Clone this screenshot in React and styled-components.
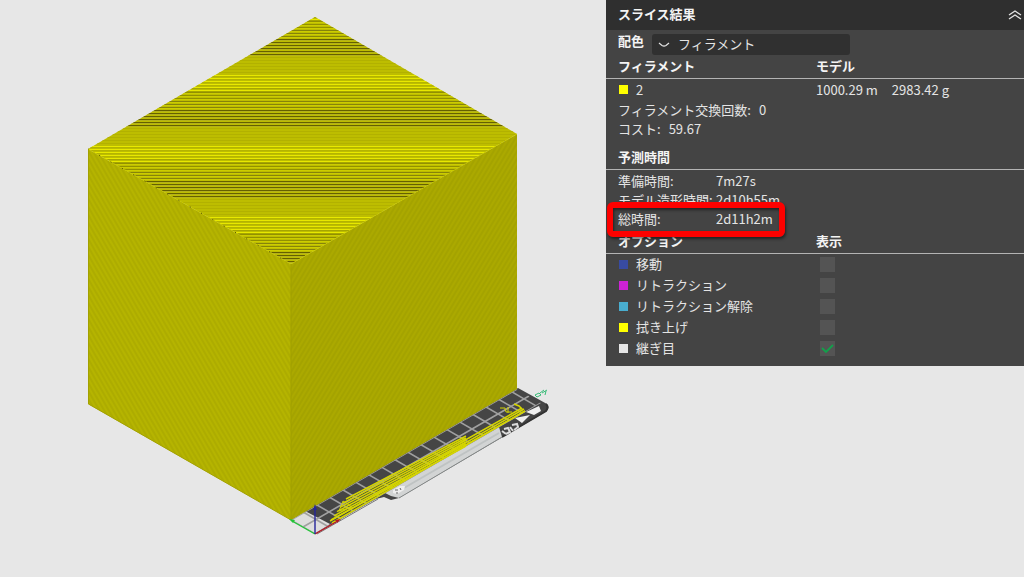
import { useState } from "react";
import styled, { createGlobalStyle } from "styled-components";

const GlobalStyle = createGlobalStyle`
	* {
		box-sizing: border-box;
	}

	body {
		margin: 0;
		background: #e7e7e7;
		font-family: "Noto Sans CJK JP", "Noto Sans", sans-serif;
		font-size: 13px;
		color: #e4e4e4;
	}
`;

const Page = styled.main`
	display: flex;
	align-items: flex-start;
	min-height: 100vh;
`;

const Viewport = styled.section`
	flex: 1;
	min-width: 0;
	overflow: hidden;

	svg {
		display: block;
	}
`;

const Panel = styled.aside`
	flex: 0 0 418px;
	padding-bottom: 7px;
	background: #444444;
`;

const PanelHeader = styled.header`
	display: flex;
	align-items: center;
	justify-content: space-between;
	height: 30px;
	padding: 0 2px 0 12px;
	background: #2f2f2f;
`;

const Title = styled.h1`
	margin: 0;
	padding-bottom: 2px;
	font-size: 13px;
	line-height: 20px;
	color: #f4f4f4;
`;

const CollapseButton = styled.button`
	display: flex;
	padding: 0;
	border: 0;
	background: none;
	color: #e4e4e4;
`;

const ColorRow = styled.div`
	display: flex;
	align-items: flex-start;
	gap: 8px;
	padding: 2px 12px 0;
`;

const ColorLabel = styled.label`
	font-weight: 700;
	line-height: 18px;
	color: #f4f4f4;
`;

const SelectBox = styled.div`
	display: grid;
	align-items: center;
	width: 198px;
	margin-top: 2px;

	> * {
		grid-area: 1 / 1;
	}

	svg {
		margin-left: 6px;
		pointer-events: none;
	}
`;

const Select = styled.select`
	appearance: none;
	width: 100%;
	height: 21px;
	padding: 0 0 2px 26px;
	border: 0;
	border-radius: 3px;
	background: #303030;
	color: inherit;
	font: inherit;
	line-height: 19px;
`;

const Table = styled.table`
	width: 100%;
	table-layout: fixed;
	border-spacing: 0;

	th,
	td {
		height: 21px;
		padding: 0;
		text-align: left;
		line-height: 20px;
	}

	th {
		height: 24px;
		padding-bottom: 2px;
		border-bottom: 1px solid #b4b4b4;
		color: #f4f4f4;
	}

	th:first-child,
	td:first-child {
		width: 210px;
		padding-left: 12px;
	}
`;

const Item = styled.div`
	display: flex;
	align-items: center;
	gap: 8px;
	padding-left: 1px;

	label {
		padding-bottom: 2px;
		line-height: 18px;
	}
`;

const Swatch = styled.span`
	width: 9px;
	height: 9px;
	background: ${(props) => props.$color};
`;

const Usage = styled.div`
	display: flex;
	gap: 14px;
`;

const Line = styled.p`
	display: flex;
	gap: ${(props) => props.$gap}px;
	margin: 0;
	padding: 0 12px;
	line-height: 19px;
`;

const SectionTitle = styled.h2`
	height: 24px;
	margin: 8px 0 1px;
	padding: 0 12px;
	border-bottom: 1px solid #b4b4b4;
	font-size: 13px;
	line-height: 22px;
	color: #f4f4f4;
`;

const Times = styled.dl`
	margin: 0 0 2px;
`;

const TimeRow = styled.div`
	position: relative;
	display: grid;
	grid-template-columns: 98px 1fr;
	padding: 0 12px;
	line-height: 19px;
	white-space: nowrap;

	dd {
		margin: 0;
	}
`;

const Highlight = styled.span`
	position: absolute;
	top: -7px;
	left: 1px;
	width: 178px;
	height: 35px;
	border: 6px solid #fd0100;
	border-radius: 6px;
	box-shadow: 1px 2px 3px rgba(0, 0, 0, 0.5), inset 1px 2px 3px rgba(0, 0, 0, 0.5);
`;

const CheckCell = styled.div`
	display: grid;
	align-items: center;
	margin-left: 4px;

	> * {
		grid-area: 1 / 1;
	}

	svg {
		pointer-events: none;
	}
`;

const Checkbox = styled.input`
	appearance: none;
	width: 15px;
	height: 15px;
	margin: 0;
	background: #545454;
`;

const options = [
	{ id: "travel", name: "移動", color: "#384ba2" },
	{ id: "retract", name: "リトラクション", color: "#cd22d6" },
	{ id: "unretract", name: "リトラクション解除", color: "#49adcf" },
	{ id: "wipe", name: "拭き上げ", color: "#ffff00" },
	{ id: "seam", name: "継ぎ目", color: "#e6e6e6" },
];

const times = [
	{ name: "準備時間:", value: "7m27s" },
	{ name: "モデル造形時間:", value: "2d10h55m" },
	{ name: "総時間:", value: "2d11h2m", marked: true },
];

// The layer lines of the top face beat against the pixel rows every 71px
const layerLines = [];
[4, 75, 146, 217].forEach((start) => {
	for (let i = 0; i < 6; i++) {
		layerLines.push({ y: start + i * 3, color: "#e8e800" });
		layerLines.push({ y: start + i * 3 + 1, color: i < 4 ? "#b4b400" : "#a6a600" });
	}
	for (let i = 0; i < 6; i++) {
		layerLines.push({ y: start + 17 + i * 3, color: i < 3 ? "#929000" : "#86830a" });
		layerLines.push({ y: start + 18 + i * 3, color: "#cccc00" });
	}
	for (let i = 0; i < 6; i++) {
		layerLines.push({ y: start + 35 + i * 3, color: "#656000" });
		layerLines.push({ y: start + 36 + i * 3, color: "#b5b21a" });
	}
	for (let i = 0; i < 6; i++) {
		layerLines.push({ y: start + 53 + i * 3, color: "#b2b100" });
	}
});

const range = (count) => Array.from({ length: count }, (_, i) => i);

const BuildPlate = () => (
	<g>
		<path d="M315 534L376 499L384 497L391 500L399 498L547 411Q550 407 547 404L518 388L291 519Z" fill="#454545" />
		<path d="M502 437L546 411Q549 407 546 404" fill="none" stroke="#333333" strokeWidth="2" />
		{/* front strip with the handle */}
		<path d="M385 493L499 427L502 437L399 498L391 496Z" fill="#d2d4d4" />
		<path d="M404 488L499 433" stroke="#bfc3c3" strokeWidth="2" />
		<path d="M399 498L502 437" stroke="#858989" strokeWidth="1" />
		<path d="M393 490L400 486L405 486L404 490L397 494L393 493Z" fill="#eeeeee" />
		<path d="M395 490h3M400 488l1 2M396 493h2" stroke="#666666" />
		<path d="M317 534L378 499" stroke="#777777" />
		<path d="M515 418L530 415L522 423ZM526 412L539 406L541 411L534 415Z" fill="#f0f0f0" />
		<g fill="none" stroke="#dcdcdc" strokeWidth="2">
			<path d="M502 431l4 3M504 429l4-1 2 4-4 2M510 427l3 4M512 425l5-1 1 3-4 3" />
		</g>
		<path d="M291 520L305 511L330 524L315 534Z" fill="#dedede" />
		<clipPath id="bed">
			<path d="M291 520L517 389L541 403L315 534Z" />
		</clipPath>
		<g clipPath="url(#bed)" stroke="#a0a0a0" strokeWidth="1.6">
			{range(18).map((i) => (
				<path key={i} d={`M${315 + i * 13} ${534 - i * 7.54}l-30 -17.4`} />
			))}
			<path d="M303 527L529 396M291 520L517 389M315 534L541 403" />
		</g>
		{/* purge lines beside the part */}
		<g fill="none" stroke="#d5d500" strokeWidth="1.5">
			{range(6).map((i) => (
				<path key={i} d={`M${346 - i * 3} ${499 + i * 4.2}L466 ${436 + i * 2}`} />
			))}
			<path d="M330 521L524 409M332 523L525 411" />
			<path d="M460 443L522 408M464 446L525 411M514 404L519 406L523 410" />
			<path d="M339 511L343 501L352 507ZM500 408h5l1 4h6M508 407v6" strokeWidth="1" />
		</g>
		<path d="M535 395l4-2 2 2-4 2ZM540 393l4-3M542 393l5-3M545 395l1-4" fill="none" stroke="#36bb76" />
	</g>
);

const Cube = () => (
	<g>
		<clipPath id="top">
			<path d="M315 17L517 134L291 264L88 149Z" />
		</clipPath>
		<pattern id="leftWall" width="4" height="8" patternUnits="userSpaceOnUse" patternTransform="rotate(-30)">
			<rect width="4" height="8" fill="#b5b400" />
			<rect width="2" height="8" fill="#adac00" />
		</pattern>
		<pattern id="rightWall" width="4" height="8" patternUnits="userSpaceOnUse" patternTransform="rotate(31)">
			<rect width="4" height="8" fill="#aba900" />
			<rect width="2" height="8" fill="#a4a300" />
		</pattern>
		<path d="M88 149L291 264V520L88 404Z" fill="url(#leftWall)" />
		<path d="M291 264L517 134V389L291 520Z" fill="url(#rightWall)" />
		<g clipPath="url(#top)">
			<rect x="88" y="17" width="429" height="247" fill="#bdbd00" />
			{layerLines.map((line) => (
				<rect key={line.y} x="88" y={line.y} width="429" height="1" fill={line.color} />
			))}
		</g>
		<path d="M88 149L291 264L517 134" fill="none" stroke="#c9c800" strokeDasharray="2 1" />
		<path d="M88 149L291 264" fill="none" stroke="#4a4700" strokeDasharray="1 12" />
		<path d="M291 264V520" stroke="#a09f00" />
		<path d="M88.5 149V404L291 520" fill="none" stroke="#a3a100" />
	</g>
);

const Axes = () => (
	<g fill="none" strokeWidth="1.4">
		<path d="M315 534L292 521" stroke="#22c437" />
		<path d="M289 519l6 1-2 3Z" fill="#22c437" />
		<path d="M315 534L336 522" stroke="#b51622" />
		<path d="M341 519l-6 1 2 3Z" fill="#b51622" />
		<path d="M315 534V510" stroke="#24249b" />
		<path d="M315 504l-2 6h4Z" fill="#24249b" />
	</g>
);

const App = () => {
	const [visible, setVisible] = useState({ seam: true });

	const toggle = (id) => setVisible({ ...visible, [id]: !visible[id] });

	return (
		<Page>
			<GlobalStyle />
			<Viewport>
				<svg width="606" height="577" viewBox="0 0 606 577" aria-hidden="true">
					<BuildPlate />
					<Cube />
					<Axes />
				</svg>
			</Viewport>

			<Panel>
				<PanelHeader>
					<Title id="panel-title">スライス結果</Title>
					<CollapseButton type="button" aria-expanded="true" aria-labelledby="panel-title">
						<svg width="14" height="12" viewBox="0 0 14 12" fill="none" stroke="currentColor" strokeWidth="1.3">
							<path d="M1 6L7 2L13 6M1 10L7 6L13 10" />
						</svg>
					</CollapseButton>
				</PanelHeader>

				<ColorRow>
					<ColorLabel htmlFor="color">配色</ColorLabel>
					<SelectBox>
						<Select id="color">
							<option>フィラメント</option>
						</Select>
						<svg width="12" height="6" viewBox="0 0 12 6" fill="none" stroke="#e4e4e4" strokeWidth="1.2">
							<path d="M1 1L4 3.5Q6 4.6 8 3.5L11 1" />
						</svg>
					</SelectBox>
				</ColorRow>

				<Table>
					<thead>
						<tr>
							<th>フィラメント</th>
							<th>モデル</th>
						</tr>
					</thead>
					<tbody>
						<tr>
							<td>
								<Item>
									<Swatch $color="#ffff00" />
									2
								</Item>
							</td>
							<td>
								<Usage>
									<span>1000.29 m</span>
									<span>2983.42 g</span>
								</Usage>
							</td>
						</tr>
					</tbody>
				</Table>
				<Line $gap={8}>
					<span>フィラメント交換回数:</span>
					<span>0</span>
				</Line>
				<Line $gap={8}>
					<span>コスト:</span>
					<span>59.67</span>
				</Line>

				<SectionTitle>予測時間</SectionTitle>
				<Times>
					{times.map((time) => (
						<TimeRow key={time.name}>
							<dt>{time.name}</dt>
							<dd>
								{time.value}
								{time.marked && <Highlight />}
							</dd>
						</TimeRow>
					))}
				</Times>

				<Table>
					<thead>
						<tr>
							<th>オプション</th>
							<th>表示</th>
						</tr>
					</thead>
					<tbody>
						{options.map((option) => (
							<tr key={option.id}>
								<td>
									<Item>
										<Swatch $color={option.color} />
										<label htmlFor={option.id}>{option.name}</label>
									</Item>
								</td>
								<td>
									<CheckCell>
										<Checkbox
											type="checkbox"
											id={option.id}
											checked={!!visible[option.id]}
											onChange={() => toggle(option.id)}
										/>
										{visible[option.id] && (
											<svg width="15" height="15" viewBox="0 0 15 15" fill="none" stroke="#12a14b" strokeWidth="1.8">
												<path d="M2 7L6 11L13 4" />
											</svg>
										)}
									</CheckCell>
								</td>
							</tr>
						))}
					</tbody>
				</Table>
			</Panel>
		</Page>
	);
};

export default App;
